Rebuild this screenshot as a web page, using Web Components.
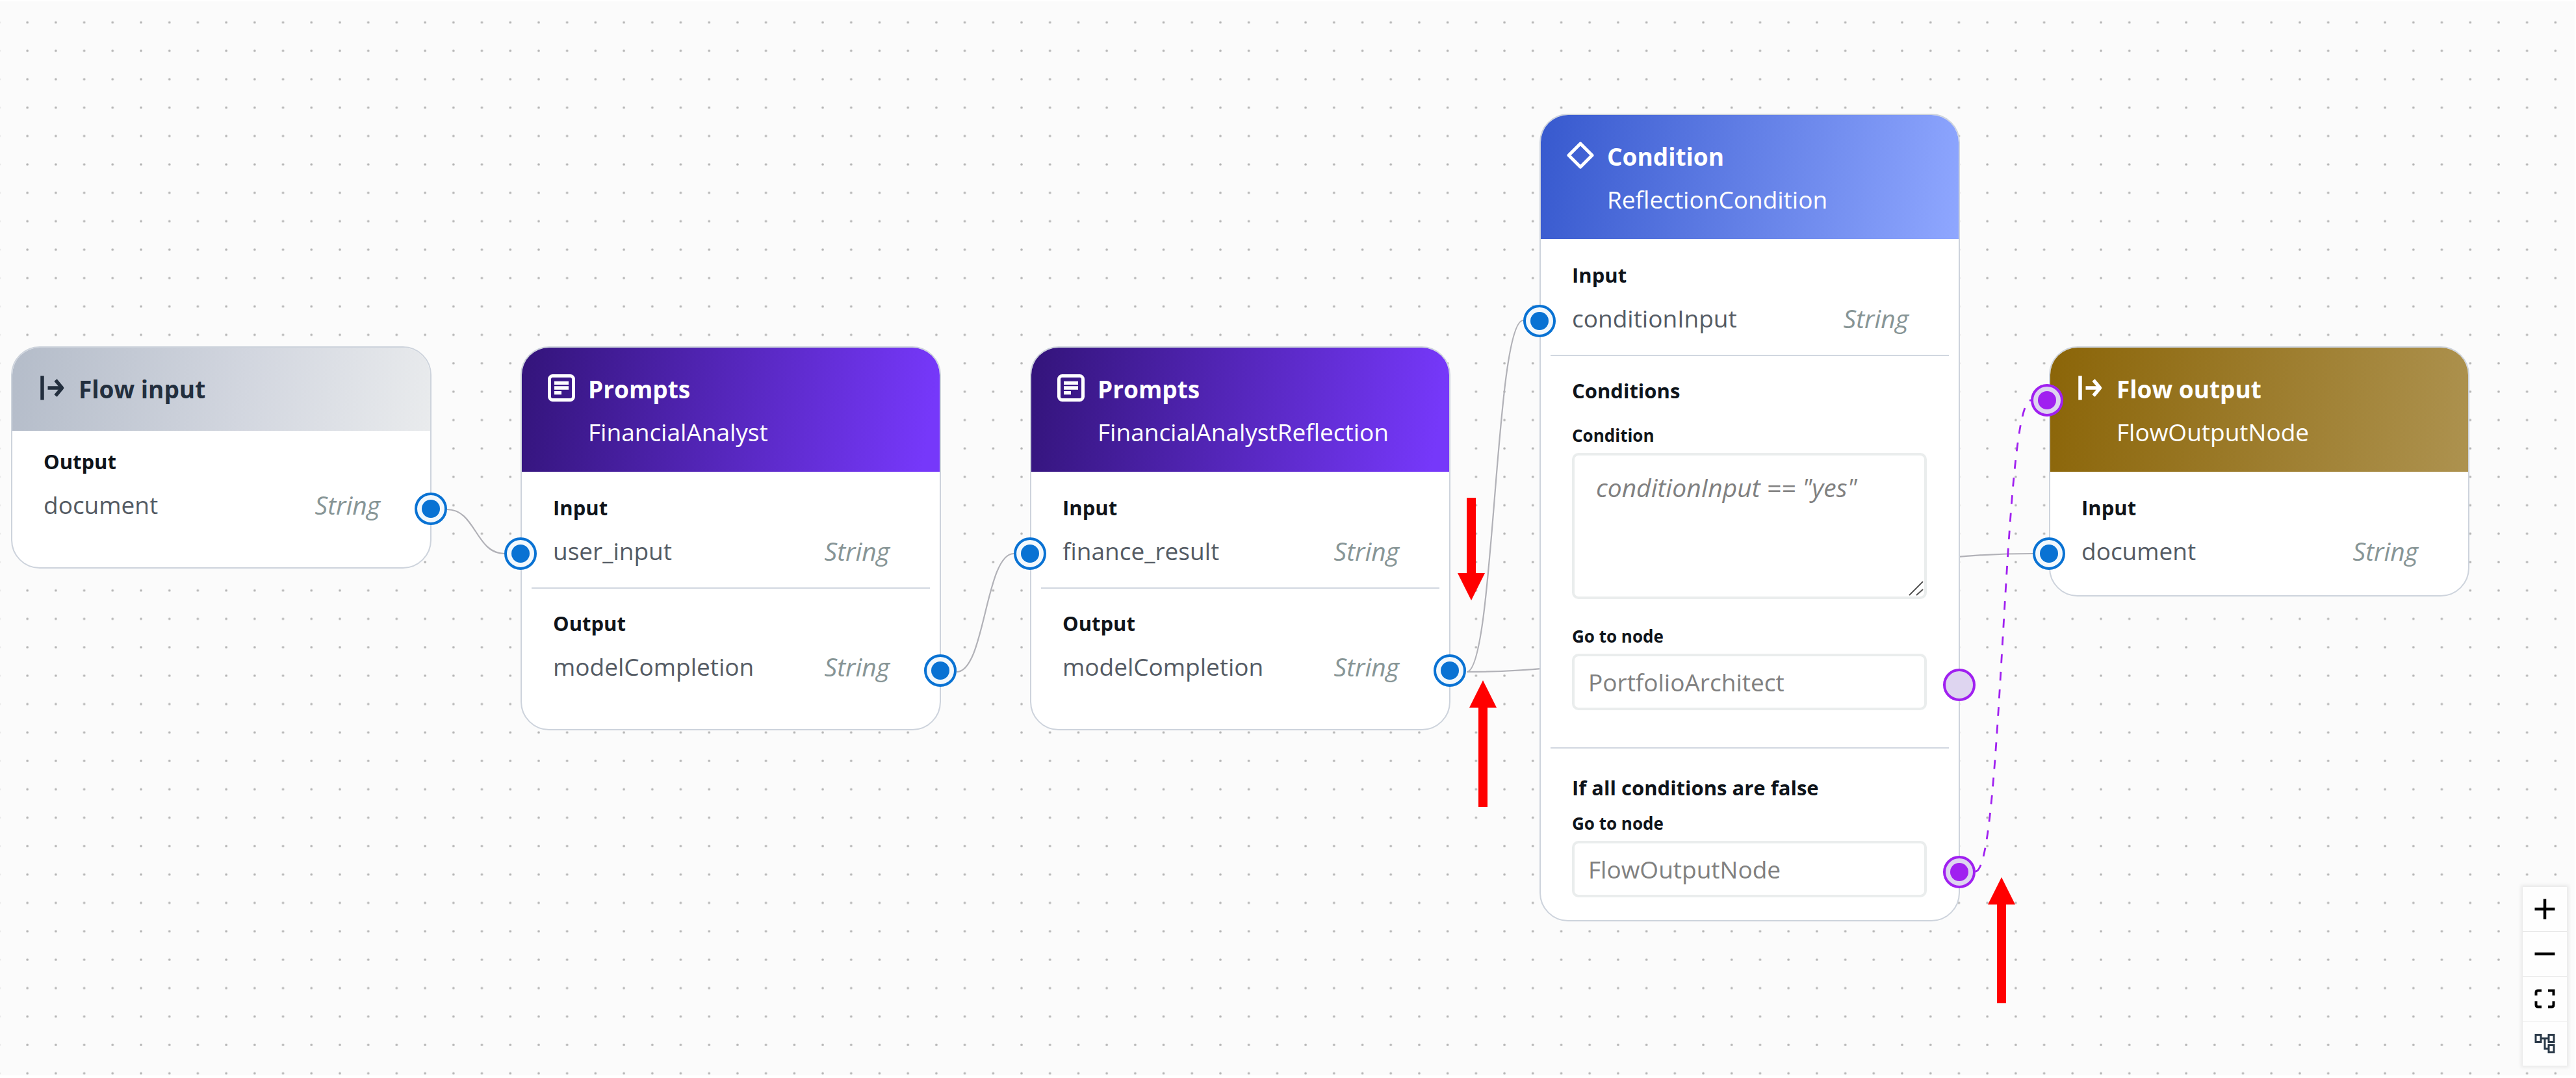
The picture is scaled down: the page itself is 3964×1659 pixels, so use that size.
<!DOCTYPE html>
<html lang="en">
<head>
<meta charset="utf-8">
<title>Flow builder</title>
<style>
  html, body { margin: 0; height: 100%; }
  body { font-family: "Open Sans", "Noto Sans", sans-serif; font-weight: 500; background: #fff; }
</style>
</head>
<body>
<flow-canvas>
  <flow-edges></flow-edges>

  <flow-node kind="input" heading="Flow input" style="left:17px;top:533px">
    <flow-section heading="Output" class="first last">
      <flow-port name="document" type="String" side="out"></flow-port>
    </flow-section>
  </flow-node>

  <flow-node kind="prompt" heading="Prompts" name="FinancialAnalyst" style="left:801px;top:533px">
    <flow-section heading="Input">
      <flow-port name="user_input" type="String" side="in"></flow-port>
    </flow-section>
    <flow-section heading="Output" class="divided last">
      <flow-port name="modelCompletion" type="String" side="out"></flow-port>
    </flow-section>
  </flow-node>

  <flow-node kind="prompt" heading="Prompts" name="FinancialAnalystReflection" style="left:1585px;top:533px">
    <flow-section heading="Input">
      <flow-port name="finance_result" type="String" side="in"></flow-port>
    </flow-section>
    <flow-section heading="Output" class="divided last">
      <flow-port name="modelCompletion" type="String" side="out"></flow-port>
    </flow-section>
  </flow-node>

  <flow-node kind="condition" heading="Condition" name="ReflectionCondition" style="left:2369px;top:175px">
    <flow-section heading="Input">
      <flow-port name="conditionInput" type="String" side="in"></flow-port>
    </flow-section>
    <flow-section heading="Conditions" class="divided loose">
      <flow-field label="Condition" value='conditionInput == "yes"' multiline></flow-field>
      <flow-field label="Go to node" value="PortfolioArchitect" handle="empty"></flow-field>
    </flow-section>
    <flow-section heading="If all conditions are false" class="divided compact">
      <flow-field label="Go to node" value="FlowOutputNode" handle="linked"></flow-field>
    </flow-section>
  </flow-node>

  <flow-node kind="output" heading="Flow output" name="FlowOutputNode" style="left:3153px;top:533px">
    <flow-handle slot="entry" tone="purple" linked></flow-handle>
    <flow-section heading="Input" class="end">
      <flow-port name="document" type="String" side="in"></flow-port>
    </flow-section>
  </flow-node>

  <flow-arrow length="158" direction="down" style="left:2243px;top:766px"></flow-arrow>
  <flow-arrow length="195" direction="up" style="left:2261px;top:1047px"></flow-arrow>
  <flow-arrow length="194" direction="up" style="left:3059px;top:1350px"></flow-arrow>

  <flow-controls slot="controls"></flow-controls>
</flow-canvas>

<script>
const define = (tag, render) => customElements.define(tag, class extends HTMLElement {
  connectedCallback() {
    if (this.shadowRoot) return;
    this.attachShadow({ mode: 'open' }).innerHTML = render(this);
  }
});
const attr = (el, key) => (el.getAttribute(key) || '').replace(/&/g, '&amp;').replace(/"/g, '&quot;').replace(/</g, '&lt;');

const enter = `<svg viewBox="0 0 44 44"><path d="M7 3.500V40.500" stroke-width="5.500"/><path d="M15.500 22H37" stroke-width="5.500"/><path d="M27.500 10L37.500 22L27.500 34" stroke-width="5.500" stroke-linejoin="round"/></svg>`;
const icons = {
  input: enter,
  output: enter,
  prompt: `<svg viewBox="0 0 44 44"><rect x="3.500" y="3.500" width="37" height="37" rx="5" stroke-width="5"/><path d="M11 14.300H33M11 22H33M11 29.700H22" stroke-width="5.300"/></svg>`,
  condition: `<svg viewBox="0 0 44 44"><path d="M22 4L40 22L22 40L4 22Z" stroke-width="5" stroke-linejoin="round"/></svg>`
};

define('flow-canvas', () => `
  <style>
    :host { display: block; position: relative; box-sizing: border-box; height: 100%; min-height: 100vh; padding: 2px 2px 4px 0; overflow: hidden; background: #fff; }
    .grid { display: block; width: 100%; height: 100%; background: #fbfbfb; }
    .controls { position: absolute; right: 14px; bottom: 19px; }
  </style>
  <svg class="grid" aria-hidden="true">
    <defs><pattern id="dots" width="20" height="20" patternUnits="userSpaceOnUse" patternTransform="translate(20.300 10.600) scale(2.1855)">
      <circle cx="10" cy="10" r="0.850" fill="#b4b4b4"/>
    </pattern></defs>
    <rect width="100%" height="100%" fill="url(#dots)"/>
  </svg>
  <slot></slot>
  <div class="controls"><slot name="controls"></slot></div>`);

define('flow-edges', () => `
  <style>
    :host { display: block; position: absolute; inset: 0; }
    svg { display: block; width: 100%; height: 100%; fill: none; stroke: #b1b1b7; stroke-width: 2.2; }
    .conditional { stroke: #a020f0; stroke-width: 2.8; stroke-dasharray: 13.6; }
  </style>
  <svg aria-hidden="true">
    <path d="M688 784C732 784 732 852 776 852"/>
    <path d="M1472 1034C1516 1034 1516 852 1560 852"/>
    <path d="M2257 1034C2300 1034 2300 493 2344 493"/>
    <path d="M2257 1034C2692 1034 2692 852 3128 852"/>
    <path class="conditional" d="M3040 1341C3082 1341 3082 616 3125 616"/>
  </svg>`);

define('flow-node', el => `
  <style>
    :host { display: block; position: absolute; box-sizing: border-box; width: 647px; background: #fff; border: 2px solid #cdd3dc; border-radius: 44px; }
    header { display: flex; align-items: flex-start; gap: 19px; box-sizing: border-box; min-height: 128px; padding: 31px 24px 28px 39px; border-radius: 42px 42px 0 0; color: #fff; font-size: 37px; line-height: 66px; }
    .input { color: #232f3e; background: linear-gradient(100deg, #b4bcc9 0%, #d2d6df 55%, #e9ebed 100%); }
    .prompt { background: linear-gradient(100deg, #33147a 0%, #7638fa 96%); }
    .condition { background: linear-gradient(100deg, #3759ce 0%, #8fa7ff 100%); }
    .output { background: linear-gradient(100deg, #8b6508 0%, #ad924f 100%); }
    .icon { display: flex; align-items: center; height: 62px; }
    svg { display: block; width: 44px; height: 44px; fill: none; stroke: currentColor; }
    h2, p { margin: 0; font-size: inherit; white-space: nowrap; }
    h2 { font-weight: 700; }
    .entry { position: absolute; left: -30px; top: 56px; }
  </style>
  <header class="${attr(el, 'kind')}">
    <span class="icon">${icons[attr(el, 'kind')]}</span>
    <div><h2>${attr(el, 'heading')}</h2>${el.hasAttribute('name') ? `<p>${attr(el, 'name')}</p>` : ''}</div>
  </header>
  <div class="entry"><slot name="entry"></slot></div>
  <slot></slot>`);

define('flow-section', el => `
  <style>
    :host { display: block; padding: 22px 0; }
    :host(.first) { padding-top: 14px; }
    :host(.last) { padding-bottom: 62px; }
    :host(.end) { padding-bottom: 34px; }
    :host(.divided)::before { content: ""; display: block; height: 2px; margin: -22px 15px 20px; background: #d1d7e0; }
    :host(.loose) { padding-bottom: 57px; }
    :host(.compact) { padding: 32px 0 35px; }
    :host(.compact)::before { margin: -32px 15px 32px; }
    h3 { margin: 0; padding-left: 48px; font-size: 31px; line-height: 66px; font-weight: 700; color: #0f141a; }
    :host(.compact) h3 { line-height: 56px; }
  </style>
  <h3>${attr(el, 'heading')}</h3>
  <slot></slot>`);

define('flow-port', el => `
  <style>
    :host { display: flex; justify-content: space-between; position: relative; padding: 0 77px 0 48px; font-size: 37px; line-height: 68px; color: #545b64; }
    em { font-size: 39px; color: #879596; }
    .in, .out { position: absolute; }
    .in { left: -27px; top: 13px; }
    .out { right: -26px; top: 15px; }
  </style>
  <span>${attr(el, 'name')}</span><em>${attr(el, 'type')}</em>
  <flow-handle class="${attr(el, 'side')}" linked></flow-handle>`);

define('flow-handle', () => `
  <style>
    :host { display: flex; align-items: center; justify-content: center; box-sizing: border-box; width: 50px; height: 50px; border: 4px solid #0972d3; border-radius: 50%; background: #f2f8fd; --dot: #0972d3; }
    :host([tone="purple"]) { border-color: #a020f0; background: #ded5f0; --dot: #a020f0; }
    :host([linked])::before { content: ""; width: 28px; height: 28px; border-radius: 50%; background: var(--dot); }
  </style>`);

define('flow-field', el => `
  <style>
    :host { display: block; position: relative; padding: 0 49px 0 48px; }
    :host([multiline]) { padding-top: 9px; margin-bottom: 30px; }
    label { display: block; font-size: 26px; line-height: 54px; font-weight: 700; color: #0f141a; }
    .box { position: relative; display: flex; }
    input, textarea { display: block; box-sizing: border-box; width: 100%; margin: 0; border: 4px solid #eaeded; border-radius: 10px; background: #fff; color: #808080; font: inherit; font-size: 37px; outline: none; }
    input { height: 87px; padding: 0 21px; }
    textarea { height: 225px; padding: 24px 33px; line-height: 50px; font-size: 39px; font-style: italic; resize: none; overflow: hidden; }
    svg { position: absolute; right: 4px; bottom: 4px; width: 24px; height: 24px; stroke: #555; stroke-width: 2; }
    flow-handle { position: absolute; right: -26px; bottom: 14px; }
  </style>
  <label for="field">${attr(el, 'label')}</label>
  <div class="box">${el.hasAttribute('multiline')
    ? `<textarea id="field" readonly>${attr(el, 'value')}</textarea><svg viewBox="0 0 24 24" aria-hidden="true"><path d="M1 22L22 1M12 22L22 13"/></svg>`
    : `<input id="field" type="text" readonly value="${attr(el, 'value')}">`}</div>
  ${el.hasAttribute('handle') ? `<flow-handle tone="purple" ${attr(el, 'handle') === 'linked' ? 'linked' : ''}></flow-handle>` : ''}`);

define('flow-arrow', el => {
  const n = Number(attr(el, 'length'));
  const points = attr(el, 'direction') === 'down'
    ? `14,0 28,0 28,${n - 42} 42,${n - 42} 21,${n} 0,${n - 42} 14,${n - 42}`
    : `14,${n} 28,${n} 28,42 42,42 21,0 0,42 14,42`;
  return `<style>:host { display: block; position: absolute; } svg { display: block; fill: #f00; }</style>
    <svg width="42" height="${n}" aria-hidden="true"><polygon points="${points}"/></svg>`;
});

define('flow-controls', () => `
  <style>
    :host { display: flex; flex-direction: column; gap: 1px; background: #e8e8e8; box-shadow: 0 0 5px 3px rgba(0, 0, 0, .07); }
    button { display: flex; align-items: center; justify-content: center; width: 68px; height: 68px; margin: 0; padding: 0; border: 0; background: #fefefe; }
    svg { width: 32px; height: 32px; fill: none; stroke: #000; stroke-width: 4.5; }
    .layout { stroke: #2b3a49; stroke-width: 3; }
  </style>
  <button type="button" aria-label="Zoom in"><svg viewBox="0 0 32 32"><path d="M16 0.500V31.500M0.500 16H31.500"/></svg></button>
  <button type="button" aria-label="Zoom out"><svg viewBox="0 0 32 32"><path d="M0.500 16H31.500"/></svg></button>
  <button type="button" aria-label="Fit view"><svg viewBox="0 0 32 32"><path stroke-width="4" d="M2.500 11V6.500Q2.500 3.500 5.500 3.500H11M21 3.500H29.500V11M2.500 20V25.500Q2.500 28.500 5.500 28.500H11M21 28.500H26.500Q29.500 28.500 29.500 25.500V20"/></svg></button>
  <button type="button" aria-label="Arrange nodes"><svg class="layout" viewBox="0 0 32 32"><path d="M2 2.500H10V13.500H2ZM22 2.500H30V13.500H22ZM22 18.500H30V29.500H22ZM10 8H22M16 8V24H22"/></svg></button>`);
</script>
</body>
</html>
